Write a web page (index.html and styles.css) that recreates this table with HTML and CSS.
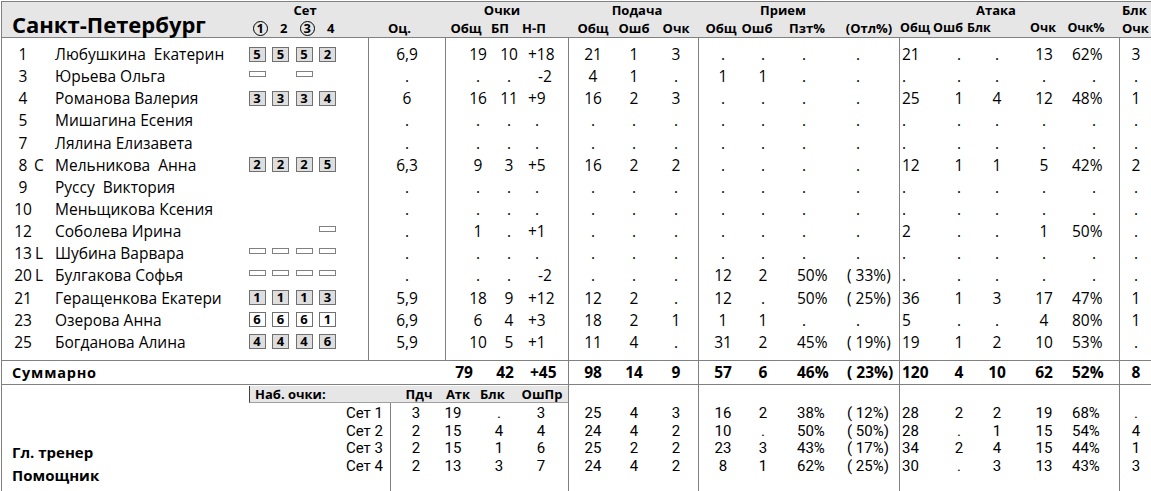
FILE: index.html
```html
<!DOCTYPE html>
<html lang="ru">
<head>
<meta charset="utf-8">
<title>Санкт-Петербург</title>
<link rel="stylesheet" href="styles.css">
</head>
<body>
<div class="sheet">
  <div class="head">
    <div class="g g-pl">
      <div class="team">Санкт-Петербург</div>
      <div class="setlbl">
        <div class="t">Сет</div>
        <div class="sets"><span><i class="circ">1</i></span><span>2</span><span><i class="circ">3</i></span><span>4</span></div>
      </div>
    </div>
    <div class="g g-oc"><div class="t"></div><div class="l"><span>Оц.</span></div></div>
    <div class="g g-pt"><div class="t">Очки</div><div class="l"><span>Общ</span><span>БП</span><span>Н-П</span></div></div>
    <div class="g g-sv"><div class="t">Подача</div><div class="l"><span>Общ</span><span>Ошб</span><span>Очк</span></div></div>
    <div class="g g-rc"><div class="t">Прием</div><div class="l"><span>Общ</span><span>Ошб</span><span>Пзт%</span><span>(Отл%)</span></div></div>
    <div class="g g-at"><div class="t">Атака</div><div class="l"><span>Общ</span><span>Ошб</span><span>Блк</span><span>Очк</span><span>Очк%</span></div></div>
    <div class="g g-bk"><div class="t">Блк</div><div class="l"><span>Очк</span></div></div>
  </div>

  <div class="body">
    <div class="g g-pl">
      <div class="r"><span>1</span><span></span><span class="nm">Любушкина  Екатерин</span><span class="s"><b class="bx">5</b></span><span class="s"><b class="bx">5</b></span><span class="s"><b class="bx">5</b></span><span class="s"><b class="bx">2</b></span></div>
      <div class="r"><span>3</span><span></span><span class="nm">Юрьева Ольга</span><span class="s"><i class="sub"></i></span><span class="s"></span><span class="s"><i class="sub"></i></span><span class="s"></span></div>
      <div class="r"><span>4</span><span></span><span class="nm">Романова Валерия</span><span class="s"><b class="bx">3</b></span><span class="s"><b class="bx">3</b></span><span class="s"><b class="bx">3</b></span><span class="s"><b class="bx">4</b></span></div>
      <div class="r"><span>5</span><span></span><span class="nm">Мишагина Есения</span><span class="s"></span><span class="s"></span><span class="s"></span><span class="s"></span></div>
      <div class="r"><span>7</span><span></span><span class="nm">Лялина Елизавета</span><span class="s"></span><span class="s"></span><span class="s"></span><span class="s"></span></div>
      <div class="r"><span>8</span><span>C</span><span class="nm">Мельникова  Анна</span><span class="s"><b class="bx">2</b></span><span class="s"><b class="bx">2</b></span><span class="s"><b class="bx">2</b></span><span class="s"><b class="bx">5</b></span></div>
      <div class="r"><span>9</span><span></span><span class="nm">Руссу  Виктория</span><span class="s"></span><span class="s"></span><span class="s"></span><span class="s"></span></div>
      <div class="r"><span>10</span><span></span><span class="nm">Меньщикова Ксения</span><span class="s"></span><span class="s"></span><span class="s"></span><span class="s"></span></div>
      <div class="r"><span>12</span><span></span><span class="nm">Соболева Ирина</span><span class="s"></span><span class="s"></span><span class="s"></span><span class="s"><i class="sub"></i></span></div>
      <div class="r"><span>13</span><span>L</span><span class="nm">Шубина Варвара</span><span class="s"><i class="sub"></i></span><span class="s"><i class="sub"></i></span><span class="s"><i class="sub"></i></span><span class="s"><i class="sub"></i></span></div>
      <div class="r"><span>20</span><span>L</span><span class="nm">Булгакова Софья</span><span class="s"><i class="sub"></i></span><span class="s"><i class="sub"></i></span><span class="s"><i class="sub"></i></span><span class="s"><i class="sub"></i></span></div>
      <div class="r"><span>21</span><span></span><span class="nm">Геращенкова Екатери</span><span class="s"><b class="bx">1</b></span><span class="s"><b class="bx">1</b></span><span class="s"><b class="bx">1</b></span><span class="s"><b class="bx">3</b></span></div>
      <div class="r"><span>23</span><span></span><span class="nm">Озерова Анна</span><span class="s"><b class="bx w">6</b></span><span class="s"><b class="bx w">6</b></span><span class="s"><b class="bx w">6</b></span><span class="s"><b class="bx w">1</b></span></div>
      <div class="r"><span>25</span><span></span><span class="nm">Богданова Алина</span><span class="s"><b class="bx">4</b></span><span class="s"><b class="bx">4</b></span><span class="s"><b class="bx">4</b></span><span class="s"><b class="bx">6</b></span></div>
    </div>

    <div class="g g-oc">
      <div class="r"><span>6,9</span></div>
      <div class="r"><span>.</span></div>
      <div class="r"><span>6</span></div>
      <div class="r"><span>.</span></div>
      <div class="r"><span>.</span></div>
      <div class="r"><span>6,3</span></div>
      <div class="r"><span>.</span></div>
      <div class="r"><span>.</span></div>
      <div class="r"><span>.</span></div>
      <div class="r"><span>.</span></div>
      <div class="r"><span>.</span></div>
      <div class="r"><span>5,9</span></div>
      <div class="r"><span>6,9</span></div>
      <div class="r"><span>5,9</span></div>
    </div>

    <div class="g g-pt">
      <div class="r"><span>19</span><span>10</span><span>+18</span></div>
      <div class="r"><span>.</span><span>.</span><span class="neg">-2</span></div>
      <div class="r"><span>16</span><span>11</span><span>+9</span></div>
      <div class="r"><span>.</span><span>.</span><span class="z">.</span></div>
      <div class="r"><span>.</span><span>.</span><span class="z">.</span></div>
      <div class="r"><span>9</span><span>3</span><span>+5</span></div>
      <div class="r"><span>.</span><span>.</span><span class="z">.</span></div>
      <div class="r"><span>.</span><span>.</span><span class="z">.</span></div>
      <div class="r"><span>1</span><span>.</span><span>+1</span></div>
      <div class="r"><span>.</span><span>.</span><span class="z">.</span></div>
      <div class="r"><span>.</span><span>.</span><span class="neg">-2</span></div>
      <div class="r"><span>18</span><span>9</span><span>+12</span></div>
      <div class="r"><span>6</span><span>4</span><span>+3</span></div>
      <div class="r"><span>10</span><span>5</span><span>+1</span></div>
    </div>

    <div class="g g-sv">
      <div class="r"><span>21</span><span>1</span><span>3</span></div>
      <div class="r"><span>4</span><span>1</span><span>.</span></div>
      <div class="r"><span>16</span><span>2</span><span>3</span></div>
      <div class="r"><span>.</span><span>.</span><span>.</span></div>
      <div class="r"><span>.</span><span>.</span><span>.</span></div>
      <div class="r"><span>16</span><span>2</span><span>2</span></div>
      <div class="r"><span>.</span><span>.</span><span>.</span></div>
      <div class="r"><span>.</span><span>.</span><span>.</span></div>
      <div class="r"><span>.</span><span>.</span><span>.</span></div>
      <div class="r"><span>.</span><span>.</span><span>.</span></div>
      <div class="r"><span>.</span><span>.</span><span>.</span></div>
      <div class="r"><span>12</span><span>2</span><span>.</span></div>
      <div class="r"><span>18</span><span>2</span><span>1</span></div>
      <div class="r"><span>11</span><span>4</span><span>.</span></div>
    </div>

    <div class="g g-rc">
      <div class="r"><span>.</span><span>.</span><span class="z">.</span><span class="z">.</span></div>
      <div class="r"><span>1</span><span>1</span><span class="z">.</span><span class="z">.</span></div>
      <div class="r"><span>.</span><span>.</span><span class="z">.</span><span class="z">.</span></div>
      <div class="r"><span>.</span><span>.</span><span class="z">.</span><span class="z">.</span></div>
      <div class="r"><span>.</span><span>.</span><span class="z">.</span><span class="z">.</span></div>
      <div class="r"><span>.</span><span>.</span><span class="z">.</span><span class="z">.</span></div>
      <div class="r"><span>.</span><span>.</span><span class="z">.</span><span class="z">.</span></div>
      <div class="r"><span>.</span><span>.</span><span class="z">.</span><span class="z">.</span></div>
      <div class="r"><span>.</span><span>.</span><span class="z">.</span><span class="z">.</span></div>
      <div class="r"><span>.</span><span>.</span><span class="z">.</span><span class="z">.</span></div>
      <div class="r"><span>12</span><span>2</span><span>50%</span><span>( 33%)</span></div>
      <div class="r"><span>12</span><span>.</span><span>50%</span><span>( 25%)</span></div>
      <div class="r"><span>1</span><span>1</span><span class="z">.</span><span class="z">.</span></div>
      <div class="r"><span>31</span><span>2</span><span>45%</span><span>( 19%)</span></div>
    </div>

    <div class="g g-at">
      <div class="r"><span>21</span><span>.</span><span>.</span><span>13</span><span>62%</span></div>
      <div class="r"><span>.</span><span>.</span><span>.</span><span>.</span><span class="z">.</span></div>
      <div class="r"><span>25</span><span>1</span><span>4</span><span>12</span><span>48%</span></div>
      <div class="r"><span>.</span><span>.</span><span>.</span><span>.</span><span class="z">.</span></div>
      <div class="r"><span>.</span><span>.</span><span>.</span><span>.</span><span class="z">.</span></div>
      <div class="r"><span>12</span><span>1</span><span>1</span><span>5</span><span>42%</span></div>
      <div class="r"><span>.</span><span>.</span><span>.</span><span>.</span><span class="z">.</span></div>
      <div class="r"><span>.</span><span>.</span><span>.</span><span>.</span><span class="z">.</span></div>
      <div class="r"><span>2</span><span>.</span><span>.</span><span>1</span><span>50%</span></div>
      <div class="r"><span>.</span><span>.</span><span>.</span><span>.</span><span class="z">.</span></div>
      <div class="r"><span>.</span><span>.</span><span>.</span><span>.</span><span class="z">.</span></div>
      <div class="r"><span>36</span><span>1</span><span>3</span><span>17</span><span>47%</span></div>
      <div class="r"><span>5</span><span>.</span><span>.</span><span>4</span><span>80%</span></div>
      <div class="r"><span>19</span><span>1</span><span>2</span><span>10</span><span>53%</span></div>
    </div>

    <div class="g g-bk">
      <div class="r"><span>3</span></div>
      <div class="r"><span>.</span></div>
      <div class="r"><span>1</span></div>
      <div class="r"><span>.</span></div>
      <div class="r"><span>.</span></div>
      <div class="r"><span>2</span></div>
      <div class="r"><span>.</span></div>
      <div class="r"><span>.</span></div>
      <div class="r"><span>.</span></div>
      <div class="r"><span>.</span></div>
      <div class="r"><span>.</span></div>
      <div class="r"><span>1</span></div>
      <div class="r"><span>1</span></div>
      <div class="r"><span>.</span></div>
    </div>
  </div>

  <div class="tot">
    <div class="tl"><span class="sum">Суммарно</span><span>79</span><span>42</span><span class="np">+45</span></div>
    <div class="g g-sv"><div class="r"><span>98</span><span>14</span><span>9</span></div></div>
    <div class="g g-rc"><div class="r"><span>57</span><span>6</span><span>46%</span><span>( 23%)</span></div></div>
    <div class="g g-at"><div class="r"><span>120</span><span>4</span><span>10</span><span>62</span><span>52%</span></div></div>
    <div class="g g-bk"><div class="r"><span>8</span></div></div>
  </div>

  <div class="foot">
    <div class="fl">
      <div class="coach">
        <div>Гл. тренер</div>
        <div>Помощник</div>
      </div>
      <div class="sp">
        <div class="bar"><span class="bl">Наб. очки:</span><span>Пдч</span><span>Атк</span><span class="bb">Блк</span><span>ОшПр</span></div>
        <div class="sp-rows">
          <div class="sp-lab">
            <div class="r">Сет 1</div>
            <div class="r">Сет 2</div>
            <div class="r">Сет 3</div>
            <div class="r">Сет 4</div>
          </div>
          <div class="sp-val">
            <div class="r"><span>3</span><span>19</span><span>.</span><span>3</span></div>
            <div class="r"><span>2</span><span>15</span><span>4</span><span>4</span></div>
            <div class="r"><span>2</span><span>15</span><span>1</span><span>6</span></div>
            <div class="r"><span>2</span><span>13</span><span>3</span><span>7</span></div>
          </div>
        </div>
      </div>
    </div>
    <div class="g g-sv">
      <div class="r"><span>25</span><span>4</span><span>3</span></div>
      <div class="r"><span>24</span><span>4</span><span>2</span></div>
      <div class="r"><span>25</span><span>2</span><span>2</span></div>
      <div class="r"><span>24</span><span>4</span><span>2</span></div>
    </div>
    <div class="g g-rc">
      <div class="r"><span>16</span><span>2</span><span>38%</span><span>( 12%)</span></div>
      <div class="r"><span>10</span><span>.</span><span>50%</span><span>( 50%)</span></div>
      <div class="r"><span>23</span><span>3</span><span>43%</span><span>( 17%)</span></div>
      <div class="r"><span>8</span><span>1</span><span>62%</span><span>( 25%)</span></div>
    </div>
    <div class="g g-at">
      <div class="r"><span>28</span><span>2</span><span>2</span><span>19</span><span>68%</span></div>
      <div class="r"><span>28</span><span>.</span><span>1</span><span>15</span><span>54%</span></div>
      <div class="r"><span>34</span><span>2</span><span>4</span><span>15</span><span>44%</span></div>
      <div class="r"><span>30</span><span>.</span><span>3</span><span>13</span><span>43%</span></div>
    </div>
    <div class="g g-bk">
      <div class="r"><span>.</span></div>
      <div class="r"><span>4</span></div>
      <div class="r"><span>1</span></div>
      <div class="r"><span>3</span></div>
    </div>
  </div>
</div>
</body>
</html>
```

FILE: styles.css
```css
html, body {
  margin: 0;
  padding: 0;
  overflow: hidden;
  background: #fff;
}
body {
  font-family: "Open Sans", "Noto Sans", sans-serif;
  font-size: 15.5px;
  color: #000;
}
.sheet {
  width: 1177px;
  margin: 1px 0 0 1px;
  border-left: 1px solid #808080;
  border-top: 1px solid #808080;
}
.head, .body, .tot, .foot {
  display: flex;
}
.g {
  box-sizing: border-box;
  flex: none;
  border-left: 1px solid #808080;
}
.g-pl { width: 366px; border-left: none; }
.g-oc { width: 77px; }
.g-pt { width: 123px; }
.g-sv { width: 130px; }
.g-rc { width: 201px; }
.g-at { width: 220px; }
.g-bk { width: 60px; }

/* ---------- header ---------- */
.head {
  height: 35px;
  background: #e6e6e6;
  border-bottom: 1px solid #808080;
  font-weight: 700;
  font-size: 13px;
}
.head .g {
  border-left-color: transparent;
  display: grid;
  grid-template-rows: 17px 18px;
}
.head .t {
  width: 80px;
  text-align: center;
  line-height: 17px;
}
.head .l {
  display: grid;
  line-height: 18px;
  text-align: center;
}
.head .g-pl { display: flex; }
.team {
  box-sizing: border-box;
  width: 246.5px;
  padding: 0 0 1px 10px;
  align-self: flex-end;
  font-size: 22px;
  line-height: 24px;
}
.setlbl {
  width: 94px;
  display: grid;
  grid-template-rows: 17px 18px;
}
.setlbl .t {
  width: auto;
  padding-left: 19px;
}
.sets {
  display: grid;
  grid-template-columns: repeat(4, 23.5px);
  line-height: 18px;
  text-align: center;
}
.circ {
  display: inline-block;
  box-sizing: border-box;
  width: 15px;
  height: 15px;
  border: 1px solid #000;
  border-radius: 50%;
  line-height: 13px;
  font-style: normal;
  text-align: center;
}
.head .g-pt .t { margin-left: 16px; }
.head .g-sv .t { margin-left: 28px; }
.head .g-rc .t { margin-left: 44px; }
.head .g-at .t { margin-left: 56px; }
.head .g-bk .t { width: auto; text-align: left; margin-left: 2px; }

.head .g-oc .l { padding-left: 19px; text-align: left; }
.head .g-pt .l { padding-left: 4px; grid-template-columns: 32px 36px 32px; }
.head .g-sv .l { padding-left: 4px; grid-template-columns: 40px 42px 42px; }
.head .g-rc .l { padding-left: 4px; grid-template-columns: 36px 36px 64px 60px; }
.head .g-at .l {
  font-size: 12.5px;
  grid-template-columns: 30px 36px 54px 46px 40px;
}
.head .g-at .l > :nth-child(3) { text-align: left; padding-left: 1px; }
.head .g-bk .l { padding-left: 2px; text-align: left; }

/* ---------- rows (shared) ---------- */
.r {
  display: grid;
  white-space: pre;
}
.r > span { text-align: center; }

.body .g { padding: 5px 0 7px; }
.body .r {
  height: 22.15px;
  line-height: 22.15px;
}

.g-pl .r {
  padding-left: 10px;
  grid-template-columns: 22px 10px 204.5px repeat(4, 23.5px);
}
.g-pl .r > .nm {
  text-align: left;
  padding-left: 11px;
  overflow: hidden;
}
.g-pl .r > .s {
  display: flex;
  align-items: center;
}
.bx {
  display: inline-block;
  box-sizing: border-box;
  width: 17px;
  height: 15px;
  border: 1px solid #707070;
  background: #dedede;
  font-size: 13px;
  font-weight: 700;
  line-height: 13px;
  text-align: center;
}
.bx.w { background: #fff; }
.sub {
  display: inline-block;
  box-sizing: border-box;
  width: 17px;
  height: 6px;
  margin-bottom: 5px;
  border: 1px solid #808080;
  background: #fff;
}

.g-oc .r { grid-template-columns: 1fr; }

.g-pt .r {
  padding-left: 16px;
  grid-template-columns: 32px 30px 1fr;
}
.g-pt .r > :nth-child(3) { text-align: left; padding-left: 4px; }
.g-pt .r > .neg { padding-left: 14px; }
.g-pt .r > .z { padding-left: 11px; }

.g-sv .r {
  padding-left: 4px;
  grid-template-columns: 40px 42px 42px;
}

.g-rc .r {
  padding-left: 4px;
  grid-template-columns: 40px 40px 60px 1fr;
}
.g-rc .r > :nth-child(3) { text-align: left; padding-left: 14px; }
.g-rc .r > :nth-child(4) { text-align: left; padding-left: 4px; }
.g-rc .r > :nth-child(3).z { padding-left: 19px; }
.g-rc .r > :nth-child(4).z { padding-left: 13px; }

.g-at .r { grid-template-columns: 32px 54px 30px 56px 1fr; }
.g-at .r > :nth-child(1) { text-align: left; padding-left: 2px; }
.g-at .r > :nth-child(3) { padding-right: 8px; }
.g-at .r > :nth-child(5) { text-align: left; }
.g-at .r > :nth-child(5).z { padding-left: 20px; }

.g-bk .r { grid-template-columns: 32px; }

/* ---------- totals ---------- */
.tot {
  height: 23px;
  border-top: 1px solid #808080;
  border-bottom: 1px solid #808080;
  font-weight: 700;
}
.tot .r, .tl {
  height: 23px;
  line-height: 23px;
}
.tl {
  box-sizing: border-box;
  width: 566px;
  flex: none;
  padding-left: 10px;
  display: grid;
  grid-template-columns: 436px 32px 50px 1fr;
  text-align: center;
}
.tl .sum {
  text-align: left;
  font-size: 14.5px;
  letter-spacing: 0.8px;
}
.tl .np { text-align: left; }

/* ---------- footer ---------- */
.foot { height: 110px; }
.foot .g { padding-top: 20px; }
.foot .r {
  height: 17.7px;
  line-height: 17.7px;
}
.foot .g, .sp-lab, .sp-val {
  font-family: Roboto, "Open Sans", sans-serif;
  font-size: 15px;
}
.fl {
  width: 566px;
  flex: none;
  display: flex;
}
.coach {
  box-sizing: border-box;
  width: 247px;
  padding: 56px 0 0 10px;
  font-size: 15px;
  font-weight: 700;
  line-height: 23px;
}
.sp {
  width: 319px;
  display: flex;
  flex-direction: column;
}
.bar {
  margin-top: 1px;
  height: 16px;
  border-left: 1px solid #404040;
  border-bottom: 1px solid #a0a0a0;
  background: #e6e6e6;
  display: grid;
  grid-template-columns: 150px 38px 40px 38px 1fr;
  font-size: 13px;
  font-weight: 700;
  line-height: 16px;
  text-align: center;
}
.bar .bl { text-align: left; padding-left: 5px; }
.bar .bb { text-align: left; padding-left: 2px; }
.sp-rows {
  flex: 1;
  display: flex;
}
.sp-lab {
  box-sizing: border-box;
  width: 141px;
  padding: 2px 7px 0 0;
  text-align: right;
}
.sp-lab .r { display: block; }
.sp-val {
  flex: 1;
  padding-top: 2px;
  border-left: 1px solid #808080;
}
.sp-val .r { grid-template-columns: 50px 24px 68px 16px; }
```
